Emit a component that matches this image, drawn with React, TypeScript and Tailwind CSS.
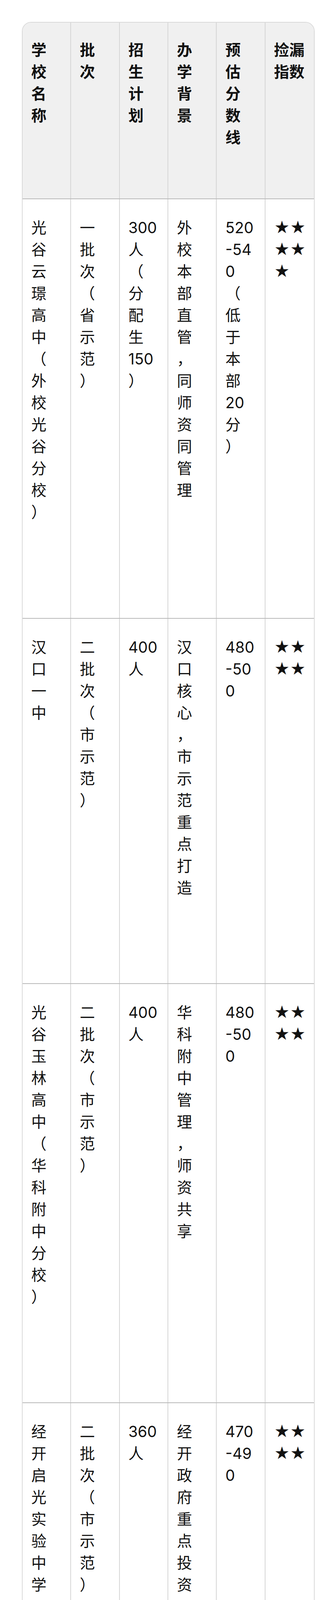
import React from "react"

type Row = {
  height: string
  cells: string[]
}

const headers = [["学", "校", "名", "称"], ["批", "次"], ["招", "生", "计", "划"], ["办", "学", "背", "景"], ["预", "估", "分", "数", "线"], ["捡漏", "指数"]]

const rows: Row[] = [
  {
    height: "h-[1074px]",
    cells: ["光谷云璟高中（外校光谷分校）", "一批次（省示范）", "300人（分配生150）", "外校本部直管，同师资同管理", "520-540（低于本部20分）", "★★★★★"],
  },
  {
    height: "h-[935px]",
    cells: ["汉口一中", "二批次（市示范）", "400人", "汉口核心，市示范重点打造", "480-500", "★★★★"],
  },
  {
    height: "h-[1073px]",
    cells: ["光谷玉林高中（华科附中分校）", "二批次（市示范）", "400人", "华科附中管理，师资共享", "480-500", "★★★★"],
  },
  {
    height: "h-[1005px]",
    cells: ["经开启光实验中学", "二批次（市示范）", "360人", "经开政府重点投资，硬件一流", "470-490", "★★★★"],
  },
  {
    height: "h-[862px]",
    cells: ["经开龙湖高中", "三批次（普高）", "300人", "经开公办普高，兜底首选", "430-450", "★★★"],
  },
]

// narrow columns: one hanzi per line, digits in runs of three, stars in pairs
function splitLines(text: string) {
  const lines: string[] = []
  let buf = ""
  let kind = ""
  for (const ch of text) {
    const k = ch === "★" ? "star" : /[\x20-\x7e]/.test(ch) ? "ascii" : "cjk"
    const max = k === "star" ? 2 : k === "ascii" ? 3 : 1
    if (buf && (k !== kind || [...buf].length >= max)) {
      lines.push(buf)
      buf = ""
    }
    buf += ch
    kind = k
  }
  if (buf) lines.push(buf)
  return lines
}

function Cell({ lines, bold, top }: { lines: string[]; bold?: boolean; top: string }) {
  return (
    <div className={`min-w-0 border-r-2 border-[#d6d6d6] last:border-r-0 pl-[22px] ${top} ${bold ? "font-bold" : "font-normal"}`}>
      {lines.map((line, i) => (
        <p key={i} className="whitespace-nowrap">
          {line}
        </p>
      ))}
    </div>
  )
}

export default function App() {
  return (
    <div className="bg-white pt-[56px] pb-[49px] pl-[56px] font-['Inter','Noto_Sans_CJK_SC',sans-serif] text-[39px] leading-[56px] text-[#111]">
      <div className="w-[750px] rounded-[24px] border-2 border-[#dadada] overflow-hidden">
        {/* Header */}
        <div className="grid grid-cols-6 h-[452px] bg-[#f0f0f0] border-b-2 border-[#b9b9b9]">
          {headers.map((h, i) => (
            <Cell key={i} lines={h} bold top="pt-[42px]" />
          ))}
        </div>

        {/* Body */}
        {rows.map((row, r) => (
          <div
            key={r}
            className={`grid grid-cols-6 bg-white ${row.height} ${r < rows.length - 1 ? "border-b-2 border-[#b9b9b9]" : ""}`}
          >
            {row.cells.map((c, i) => (
              <Cell key={i} lines={splitLines(c)} top="pt-[45px]" />
            ))}
          </div>
        ))}
      </div>
    </div>
  )
}
